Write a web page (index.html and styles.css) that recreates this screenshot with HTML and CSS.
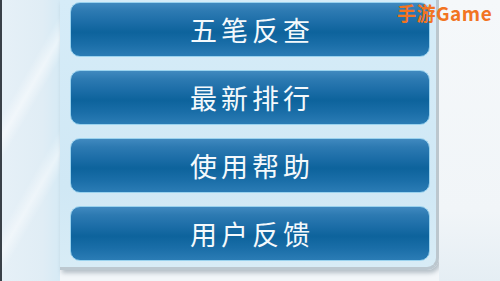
FILE: index.html
```html
<!DOCTYPE html>
<html>
<head>
    <title>五笔字典</title>
    <link rel="stylesheet" href="styles.css">
</head>
<body>
    <div class="screen">
        <div class="edge"></div>
        <div class="side"></div>

        <!-- Menu panel -->
        <div class="panel">
            <button class="menu-btn">五笔反查</button>
            <button class="menu-btn">最新排行</button>
            <button class="menu-btn">使用帮助</button>
            <button class="menu-btn">用户反馈</button>
        </div>

        <div class="right"></div>
        <div class="watermark">手游Game</div>
    </div>
</body>
</html>
```

FILE: styles.css
```css
body { margin: 0; background: #f2f6f9; font-family: "Noto Sans CJK SC", "Noto Sans", sans-serif; }
.screen {
    position: relative;
    display: flex;
    width: 500px;
    height: 281px;
    overflow: hidden;
    background: #f2f6f9;
}
.edge { width: 2px; background: #3a4148; }
.side {
    width: 58px;
    background:
        linear-gradient(120deg, rgba(255,255,255,0) 0 30%, rgba(255,255,255,0.5) 36%, rgba(255,255,255,0) 42%, rgba(255,255,255,0) 60%, rgba(255,255,255,0.45) 66%, rgba(255,255,255,0) 72%),
        linear-gradient(90deg, #e6f0f7, #e0edf5 70%, #d6eaf5);
}
.panel {
    width: 360px;
    height: 265px;
    padding: 2px 6px 0 10px;
    display: flex;
    flex-direction: column;
    gap: 13px;
    background: linear-gradient(180deg, #d6ecf8, #d0e8f5 70%, #d8ecf6);
    border-bottom: 3px solid #bcc8d0;
    border-right: 3px solid #bcc7ce;
    border-radius: 0 0 12px 0;
    box-shadow: 2px 3px 4px rgba(90, 110, 125, 0.4);
}
.menu-btn {
    height: 55px;
    flex: none;
    border: 1px solid #9ad2ee;
    border-radius: 10px;
    background: linear-gradient(180deg, #4089bf 0%, #2d7ab2 15%, #1d6ea8 35%, #0d639c 55%, #1a6ea8 78%, #2b7cb5 100%);
    color: #f4f9fc;
    font-family: "Noto Sans CJK SC", "Noto Sans", sans-serif;
    font-size: 27px;
    letter-spacing: 4px;
    text-indent: 4px;
    padding: 0;
}
.right {
    flex: 1;
    background: linear-gradient(180deg, #f5f8fa, #f1f5f8 75%, #e5eef4);
}
.watermark {
    position: absolute;
    top: -1px;
    left: 397px;
    color: #f27422;
    font-family: "Noto Sans CJK SC", sans-serif;
    font-weight: bold;
    font-size: 19px;
    letter-spacing: 0.5px;
    white-space: nowrap;
}
```
